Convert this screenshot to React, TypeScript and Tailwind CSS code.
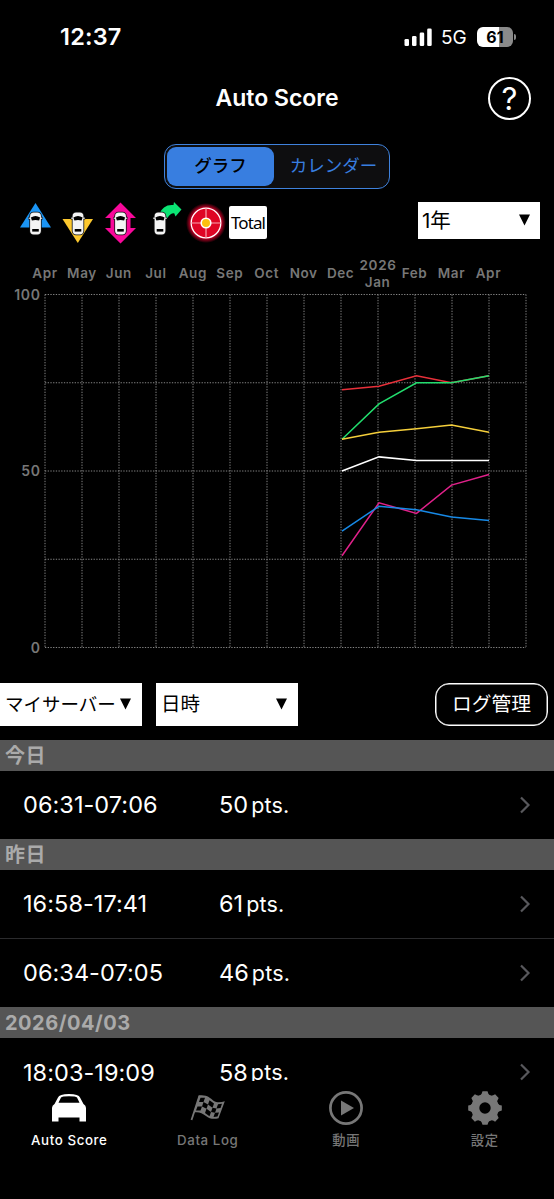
import { useState } from 'react';

const months = ['Apr', 'May', 'Jun', 'Jul', 'Aug', 'Sep', 'Oct', 'Nov', 'Dec', 'Jan', 'Feb', 'Mar', 'Apr'];

const series = [
  { id: 'handling', color: '#e8303a', values: [73, 74, 77, 75, 77] },
  { id: 'turn', color: '#22dd6e', values: [59, 69, 75, 75, 77] },
  { id: 'brake', color: '#f5cf3b', values: [59, 61, 62, 63, 61] },
  { id: 'total', color: '#ffffff', values: [50, 54, 53, 53, 53] },
  { id: 'smooth', color: '#e0218a', values: [26, 41, 38, 46, 49] },
  { id: 'accel', color: '#1789e6', values: [33, 40, 39, 37, 36] },
];

const pointX = [342, 379, 416.5, 451.5, 489];

const sections = [
  { id: 1, title: '今日', rows: [{ time: '06:31-07:06', pts: 50 }] },
  { id: 2, title: '昨日', rows: [{ time: '16:58-17:41', pts: 61 }, { time: '06:34-07:05', pts: 46 }] },
  { id: 3, title: '2026/04/03', rows: [{ time: '18:03-19:09', pts: 58 }] },
];

const tabs = [
  { id: 'score', label: 'Auto Score' },
  { id: 'log', label: 'Data Log' },
  { id: 'movie', label: '動画' },
  { id: 'settings', label: '設定' },
];

function MiniCar({ x, y }: { x: number; y: number }) {
  return (
    <g transform={`translate(${x} ${y})`}>
      <rect x="-6.2" y="-11.2" width="12.4" height="23.4" rx="4.2" fill="#111" />
      <path d="M-7.2 -4.8H7.2" stroke="#111" strokeWidth="2.6" />
      <rect x="-5.4" y="-10.4" width="10.8" height="21.8" rx="3.6" fill="#f4f4f4" />
      <path d="M-6.8 -4.8H6.8" stroke="#f4f4f4" strokeWidth="1.1" />
      <path d="M-4.6 -5.6Q0 -8.6 4.6 -5.6L3.6 -2.4Q0 -3.4 -3.6 -2.4Z" fill="#000" />
      <path d="M-3.3 6H3.3V8.6H-3.3Z" fill="#000" />
    </g>
  );
}

function ScoreIcons() {
  return (
    <svg width="212" height="44" viewBox="0 0 212 44">
      <path d="M15.5 2L31 26.5H0Z" fill="#1b95f5" />
      <MiniCar x={15.5} y={22} />
      <path d="M42.5 18H73L57.8 42Z" fill="#fcc82e" />
      <MiniCar x={58} y={22} />
      <path d="M100.5 1.5L116 17H110.5V27H116L100.5 42.5L85 27H90.5V17H85Z" fill="#f8089a" />
      <MiniCar x={100.5} y={22} />
      <path d="M139 13.5Q143 3 153.5 4L154 1L161.5 8.5L155.5 15.5L154.2 12.2Q150 12 147.5 17H140Z" fill="#0be574" />
      <MiniCar x={140} y={22} />
    </svg>
  );
}

function TargetIcon() {
  return (
    <svg width="42" height="44" viewBox="0 0 42 44">
      <defs>
        <radialGradient id="glow">
          <stop offset="72%" stopColor="#e6002d" />
          <stop offset="100%" stopColor="#e6002d" stopOpacity="0" />
        </radialGradient>
      </defs>
      <circle cx="21" cy="22" r="20" fill="url(#glow)" />
      <circle cx="21" cy="22" r="14.8" fill="#df0525" stroke="#fff" strokeWidth="1.3" />
      <path d="M21 7V37M6 22H36" stroke="#f8a5b0" strokeWidth="1.2" />
      <circle cx="21" cy="22" r="4.8" fill="#fdbf10" stroke="#fff" strokeWidth="1.6" />
    </svg>
  );
}

function ScoreChart() {
  const y = (value: number) => 392.5 - value * 3.53;
  return (
    <svg width="554" height="408" viewBox="0 0 554 408" className="block shrink-0 font-['Inter',sans-serif]">
      <g stroke="#858585" strokeWidth="1" strokeDasharray="1.3 1.4">
        {[0, 25, 50, 75, 100].map((v) => (
          <line key={v} x1="45" x2="526" y1={y(v)} y2={y(v)} />
        ))}
        {Array.from({ length: 14 }, (_, i) => (
          <line key={i} x1={45 + i * 37} x2={45 + i * 37} y1={y(100)} y2={y(0)} />
        ))}
      </g>
      <g fill="#777" fontSize="13.5" fontWeight="600" letterSpacing="0.6">
        {months.map((m, i) => (
          <text key={i} x={45 + i * 36.95} y={i === 9 ? 32 : 23} textAnchor="middle">{m}</text>
        ))}
        <text x="378" y="15" textAnchor="middle">2026</text>
        <text x="40.5" y="44.5" textAnchor="end" fontSize="14">100</text>
        <text x="40.5" y="221" textAnchor="end" fontSize="14">50</text>
        <text x="40.5" y="397.5" textAnchor="end" fontSize="14">0</text>
      </g>
      {series.map((s) => (
        <polyline
          key={s.id}
          points={s.values.map((v, i) => `${pointX[i]},${y(v)}`).join(' ')}
          fill="none"
          stroke={s.color}
          strokeWidth="1.5"
        />
      ))}
    </svg>
  );
}

function TabIcon({ id }: { id: string }) {
  if (id === 'score') {
    return (
      <svg width="36" height="36" viewBox="0 0 36 36" fill="currentColor">
        <path fillRule="evenodd" d="M7 7.5Q8.2 4 18 4T29 7.5L32.5 14Q35 15.5 35 18V31.5H28.5V27.5H7.5V31.5H1V18Q1 15.5 3.5 14ZM10 7.5L7.5 12.8H28.5L26 7.5Q25 6.2 18 6.2T10 7.5Z" />
      </svg>
    );
  }
  if (id === 'log') {
    return (
      <svg width="36" height="36" viewBox="0 0 36 36">
        <path d="M9.5 5.5L1.5 30" stroke="currentColor" strokeWidth="1.8" />
        <path d="M9 5.500C17 4.500 20 8 23.500 10.800C27 13 31 12.500 34.800 11.200L28.500 28.200C24 29.500 19.500 29 16 26C12 22.500 8 21.500 4 22.500Z" fill="currentColor" />
        <g fill="#000">
          <path d="M10.5 7.8L15 7.8L13.5 12.1L9 12.1Z" />
          <path d="M19.5 10.2L24 13.4L22.5 17.7L18 14.5Z" />
          <path d="M28 14.2L32 13.8L30.5 18.1L26.5 18.5Z" />
          <path d="M13.5 12.1L18 14.5L16.5 18.8L12 16.4Z" />
          <path d="M22.5 17.7L26.5 18.5L25 22.8L21 22Z" />
          <path d="M7.5 16.4L12 16.4L10.5 20.5L6 20.5Z" />
          <path d="M16.500 18.8L21 22L19.500 26.300L15 23.100Z" />
          <path d="M25 22.8L29 22.4L27.500 26.500L23.500 27Z" />
        </g>
      </svg>
    );
  }
  if (id === 'movie') {
    return (
      <svg width="36" height="36" viewBox="0 0 36 36">
        <circle cx="18" cy="18" r="15.6" fill="none" stroke="currentColor" strokeWidth="2.7" />
        <path d="M13 10.5L26 18L13 25.5Z" fill="currentColor" />
      </svg>
    );
  }
  return (
    <svg width="36" height="36" viewBox="0 0 36 36" fill="currentColor">
      <circle cx="18" cy="18" r="9.7" fill="none" stroke="currentColor" strokeWidth="8" />
      {[0, 45, 90, 135, 180, 225, 270, 315].map((a) => (
        <path key={a} d="M12.5 6Q15 4.5 15.5 1.2H20.5Q21 4.5 23.5 6Z" transform={`rotate(${a} 18 18)`} />
      ))}
    </svg>
  );
}

function Arrow() {
  return (
    <svg width="11" height="12" viewBox="0 0 11 12">
      <path d="M0 0.5H11L5.5 11.5Z" fill="#000" />
    </svg>
  );
}

export default function App() {
  const [view, setView] = useState('graph');
  const [activeTab, setActiveTab] = useState('score');

  return (
    <div className="w-[554px] h-[1199px] bg-black text-white flex flex-col overflow-hidden font-['Inter','Noto_Sans_CJK_JP',sans-serif]">
      {/* Status bar */}
      <div className="h-[74px] shrink-0 flex items-center justify-between pl-[60px] pr-[38px]">
        <span className="text-[23.5px] font-semibold tracking-[0.2px]">12:37</span>
        <div className="flex items-center">
          <svg width="28" height="18" viewBox="0 0 28 18" fill="#fff">
            <rect x="0.5" y="11" width="4.5" height="7" rx="1.3" />
            <rect x="8" y="8" width="4.5" height="10" rx="1.3" />
            <rect x="15.7" y="4.5" width="4.5" height="13.5" rx="1.3" />
            <rect x="23.2" y="0.5" width="4.5" height="17.5" rx="1.3" />
          </svg>
          <span className="ml-[9px] text-[19px] leading-none w-[28px]">5G</span>
          <div className="ml-[8px] w-[36px] h-[20px] rounded-[6px] flex items-center justify-center bg-linear-to-r from-white from-61% to-[#8a8a8a] to-61% text-black text-[16px] font-bold leading-none">61</div>
          <div className="ml-px w-[2px] h-[6px] rounded-r-full bg-[#8a8a8a]"></div>
        </div>
      </div>

      {/* Header */}
      <div className="h-[48px] shrink-0 grid grid-cols-3 items-center">
        <div></div>
        <h1 className="text-center text-[23px] font-semibold pt-px">Auto Score</h1>
        <button className="justify-self-end mr-[23px] w-[43px] h-[43px] rounded-full border-2 border-white flex items-center justify-center pt-px text-[31px] leading-none cursor-pointer">?</button>
      </div>

      {/* View switch */}
      <div className="mt-[21.5px] mx-auto w-[226px] h-[45px] shrink-0 flex p-[2px] border border-[#3f82dd] rounded-[12px] bg-[#0e0e10] text-[17.5px]">
        <button
          onClick={() => setView('graph')}
          className={`w-[107px] rounded-[9px] pt-px cursor-pointer ${view === 'graph' ? 'bg-[#387ee0] text-black font-medium' : 'text-[#387ee0]'}`}
        >
          グラフ
        </button>
        <button
          onClick={() => setView('calendar')}
          className={`flex-1 rounded-[9px] pl-[6px] pt-px cursor-pointer ${view === 'calendar' ? 'bg-[#387ee0] text-black font-medium' : 'text-[#387ee0]'}`}
        >
          カレンダー
        </button>
      </div>

      {/* Score types and range */}
      <div className="h-[66px] pt-[12px] shrink-0 flex items-start">
        <div className="flex items-center pl-[20px]">
          <ScoreIcons />
          <div className="-ml-[47px]"><TargetIcon /></div>
          <div className="ml-[2px] w-[38px] h-[33px] bg-white rounded-[2px] text-black text-[17px] tracking-[-0.9px] font-['Noto_Sans',sans-serif] flex items-center justify-center">Total</div>
        </div>
        <button className="ml-auto mr-[14px] mt-px w-[122px] h-[37px] bg-white text-black flex items-center justify-between pl-[4px] pr-[10px] text-[20.5px] cursor-pointer">
          <span className="pt-[2px]">1年</span>
          <Arrow />
        </button>
      </div>

      <ScoreChart />

      {/* Filters */}
      <div className="mt-[20px] h-[43px] shrink-0 flex text-[18.5px]">
        <button className="w-[142px] bg-white text-black flex items-center justify-between pl-[5px] pr-[11px] cursor-pointer whitespace-nowrap">
          <span className="pt-[2px]">マイサーバー</span>
          <Arrow />
        </button>
        <button className="ml-[14px] w-[142px] bg-white text-black flex items-center justify-between pl-[5px] pr-[11px] text-[19.5px] cursor-pointer">
          <span className="pt-[2px]">日時</span>
          <Arrow />
        </button>
        <button className="ml-auto mr-[6px] w-[113px] border border-white shadow-[inset_0_0_0_0.5px_#fff] rounded-[14px] pt-[2px] text-[19.8px] cursor-pointer">ログ管理</button>
      </div>

      {/* Drive list */}
      <div className="mt-[14px] h-[341px] shrink-0 overflow-hidden">
        {sections.map((section) => (
          <div key={section.id}>
            <div className="h-[31px] bg-[#555] text-[#aaa] flex items-center pl-[5px] pt-px text-[20px] leading-[30px] font-bold tracking-[0.5px]">
              {section.title}
            </div>
            <div className="divide-y divide-[#2b2b2d]">
              {section.rows.map((row) => (
                <div key={row.time} className="h-[68.5px] flex items-center pl-[23px] pr-[23px] text-[23.5px]">
                  <span className="w-[196px] tracking-[0.05px]">{row.time}</span>
                  <span>{row.pts}</span>
                  <span className="ml-[3px] text-[21.5px] tracking-[0.2px]">pts.</span>
                  <svg width="12" height="18" viewBox="0 0 12 18" className="ml-auto">
                    <path d="M2 1.5L9.5 9L2 16.5" fill="none" stroke="#58585c" strokeWidth="2.2" />
                  </svg>
                </div>
              ))}
            </div>
          </div>
        ))}
      </div>

      {/* Tab bar */}
      <div className="flex-1 grid grid-cols-4 items-start pt-[9px]">
        {tabs.map((tab) => (
          <button
            key={tab.id}
            onClick={() => setActiveTab(tab.id)}
            className={`flex flex-col items-center cursor-pointer ${activeTab === tab.id ? 'text-white' : 'text-[#777]'}`}
          >
            <TabIcon id={tab.id} />
            <span className="mt-[4px] text-[13.3px] leading-5 font-medium tracking-[0.6px]">{tab.label}</span>
          </button>
        ))}
      </div>
    </div>
  );
}
